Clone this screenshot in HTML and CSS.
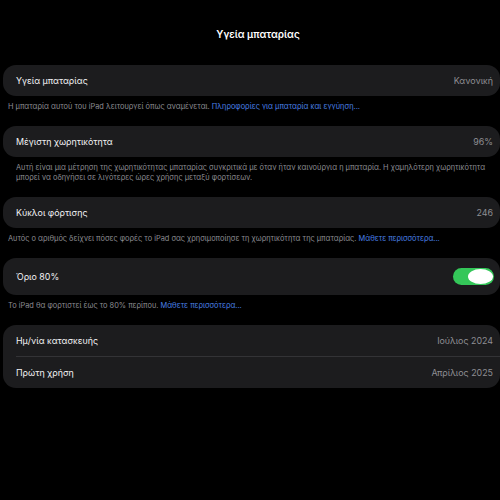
FILE: index.html
```html
<!DOCTYPE html>
<html lang="el">
<head>
<meta charset="utf-8">
<title>Υγεία μπαταρίας</title>
<link rel="stylesheet" href="styles.css">
</head>
<body>
<div class="page">
  <header class="nav">
    <h1 class="nav-title">Υγεία μπαταρίας</h1>
  </header>

  <section class="card">
    <div class="row"><span class="label">Υγεία μπαταρίας</span><span class="value">Κανονική</span></div>
  </section>
  <p class="note">Η μπαταρία αυτού του iPad λειτουργεί όπως αναμένεται. <span class="link">Πληροφορίες για μπαταρία και εγγύηση...</span></p>

  <section class="card">
    <div class="row"><span class="label">Μέγιστη χωρητικότητα</span><span class="value">96%</span></div>
  </section>
  <p class="note note-inset">Αυτή είναι μια μέτρηση της χωρητικότητας μπαταρίας συγκριτικά με όταν ήταν καινούργια η μπαταρία. Η χαμηλότερη χωρητικότητα μπορεί να οδηγήσει σε λιγότερες ώρες χρήσης μεταξύ φορτίσεων.</p>

  <section class="card">
    <div class="row"><span class="label">Κύκλοι φόρτισης</span><span class="value">246</span></div>
  </section>
  <p class="note">Αυτός ο αριθμός δείχνει πόσες φορές το iPad σας χρησιμοποίησε τη χωρητικότητα της μπαταρίας. <span class="link">Μάθετε περισσότερα...</span></p>

  <section class="card">
    <div class="row row-tall"><span class="label">Όριο 80%</span><span class="toggle"><span class="knob"></span></span></div>
  </section>
  <p class="note">Το iPad θα φορτιστεί έως το 80% περίπου. <span class="link">Μάθετε περισσότερα...</span></p>

  <section class="card">
    <div class="row"><span class="label">Ημ/νία κατασκευής</span><span class="value">Ιούλιος 2024</span></div>
    <div class="sep"></div>
    <div class="row"><span class="label">Πρώτη χρήση</span><span class="value">Απρίλιος 2025</span></div>
  </section>
</div>
</body>
</html>
```

FILE: styles.css
```css
html, body {
  margin: 0;
  padding: 0;
  background: #000;
}
body {
  font-family: Inter, "Noto Sans", "DejaVu Sans", sans-serif;
  color: #fff;
  width: 500px;
  height: 500px;
  overflow: hidden;
}
.page {
  padding-left: 3px;
}
.nav {
  height: 65px;
  display: flex;
  justify-content: center;
  padding-left: 13px;
  box-sizing: border-box;
}
.nav-title {
  margin: 28px 0 0;
  font-size: 10px;
  line-height: 13px;
  font-weight: 600;
  letter-spacing: 0;
}
.card {
  background: #1c1c1e;
  border-radius: 13px;
  width: 497px;
}
.row {
  height: 31px;
  display: flex;
  align-items: center;
  justify-content: space-between;
  padding: 0 7px 0 13px;
  font-size: 8.9px;
}
.row-tall {
  height: 37px;
  padding-right: 6px;
}
.label {
  color: #f2f2f4;
}
.value {
  color: #8e8e93;
}
.sep {
  height: 1px;
  background: #333336;
  margin-left: 13px;
}
.note {
  margin: 0;
  padding: 6px 0 14px 5px;
  font-size: 7.4px;
  line-height: 10px;
  color: #8d8d93;
}
.note-inset {
  padding-left: 13px;
  padding-right: 10px;
}
.link {
  color: #4a80e8;
}
.toggle {
  width: 41px;
  height: 17px;
  border-radius: 9px;
  background: #34c759;
  display: flex;
  align-items: center;
  justify-content: flex-end;
  padding-right: 1px;
  box-sizing: border-box;
}
.knob {
  width: 25px;
  height: 15px;
  border-radius: 50%;
  background: #fff;
}
```
